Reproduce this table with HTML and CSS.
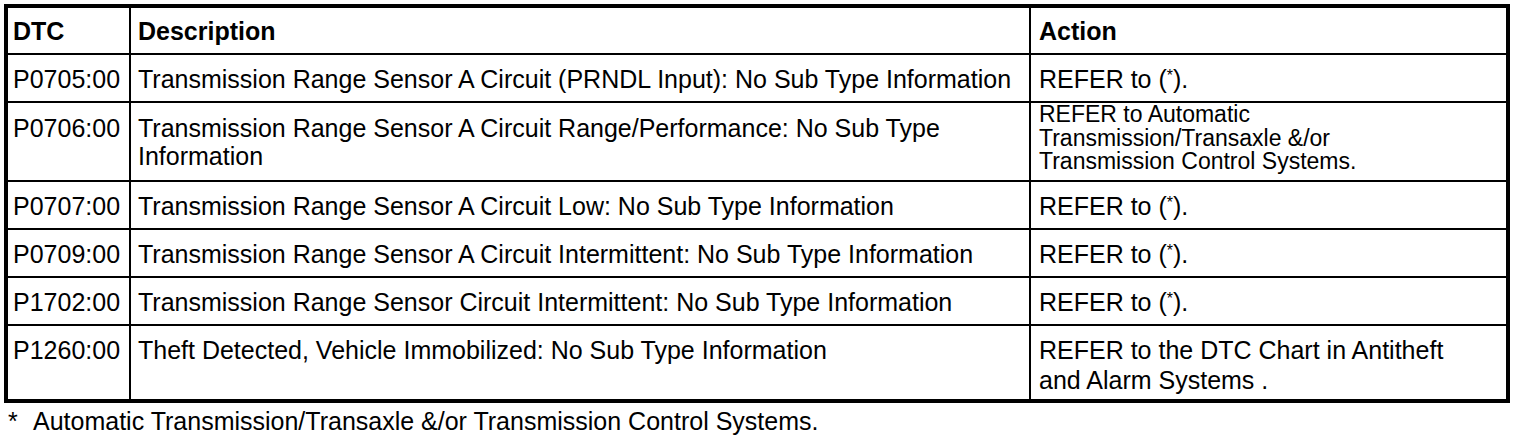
FILE: index.html
```html
<!DOCTYPE html>
<html>
<head>
<meta charset="utf-8">
<link rel="stylesheet" href="styles.css">
</head>
<body>
<table class="dtc-table">
  <colgroup>
    <col class="col-dtc">
    <col class="col-desc">
    <col class="col-action">
  </colgroup>
  <tr class="row-head">
    <th>DTC</th>
    <th>Description</th>
    <th>Action</th>
  </tr>
  <tr class="row-std">
    <td class="dtc">P0705:00</td>
    <td class="desc">Transmission Range Sensor A Circuit (PRNDL Input): No Sub Type Information</td>
    <td class="act">REFER to (<sup>*</sup>).</td>
  </tr>
  <tr class="row-tall">
    <td class="dtc">P0706:00</td>
    <td class="desc desc-wrap">Transmission Range Sensor A Circuit Range/Performance: No Sub Type<br>Information</td>
    <td class="act act-tight">REFER to Automatic<br>Transmission/Transaxle &amp;/or<br>Transmission Control Systems.</td>
  </tr>
  <tr class="row-std">
    <td class="dtc">P0707:00</td>
    <td class="desc">Transmission Range Sensor A Circuit Low: No Sub Type Information</td>
    <td class="act">REFER to (<sup>*</sup>).</td>
  </tr>
  <tr class="row-std">
    <td class="dtc">P0709:00</td>
    <td class="desc">Transmission Range Sensor A Circuit Intermittent: No Sub Type Information</td>
    <td class="act">REFER to (<sup>*</sup>).</td>
  </tr>
  <tr class="row-std">
    <td class="dtc">P1702:00</td>
    <td class="desc">Transmission Range Sensor Circuit Intermittent: No Sub Type Information</td>
    <td class="act">REFER to (<sup>*</sup>).</td>
  </tr>
  <tr class="row-last">
    <td class="dtc">P1260:00</td>
    <td class="desc">Theft Detected, Vehicle Immobilized: No Sub Type Information</td>
    <td class="act act-loose">REFER to the DTC Chart in Antitheft<br>and Alarm Systems .</td>
  </tr>
</table>
<p class="footnote"><span class="star">*</span>Automatic Transmission/Transaxle &amp;/or Transmission Control Systems.</p>
</body>
</html>
```
FILE: styles.css
```css
html, body {
  margin: 0;
  padding: 0;
  background: #fff;
}
body {
  font-family: "Liberation Sans", Arial, sans-serif;
  font-size: 25px;
  color: #000;
  padding: 4px 0 0 4px;
}
.dtc-table {
  border-collapse: collapse;
  border: 4px solid #000;
  width: 1506px;
  table-layout: fixed;
}
.col-dtc { width: 124px; }
.col-desc { width: 900px; }
.col-action { width: auto; }
.dtc-table th,
.dtc-table td {
  border: 2px solid #000;
  text-align: left;
  vertical-align: top;
  padding: 0;
  line-height: 28px;
  white-space: nowrap;
  box-sizing: border-box;
}
.dtc-table th {
  font-weight: bold;
  height: 48px;
  padding-top: 9px;
}
.row-std td { height: 48px; padding-top: 10px; }
.row-tall td { height: 79px; padding-top: 11px; }
.row-last td { height: 76px; padding-top: 10px; }
.dtc-table .dtc,
.dtc-table th:first-child { padding-left: 5px; }
.dtc-table .desc,
.dtc-table th:nth-child(2) { padding-left: 7px; }
.dtc-table .act,
.dtc-table th:nth-child(3) { padding-left: 8px; }
.dtc-table .act-tight { padding-top: 0; font-size: 23px; line-height: 23.5px; }
.dtc-table .act-loose { line-height: 30px; padding-top: 9px; }
sup {
  font-size: 16px;
  vertical-align: 7px;
  line-height: 0;
}
.footnote {
  margin: 4px 0 0 4px;
  line-height: 28px;
}
.star {
  display: inline-block;
  width: 25px;
}
```
